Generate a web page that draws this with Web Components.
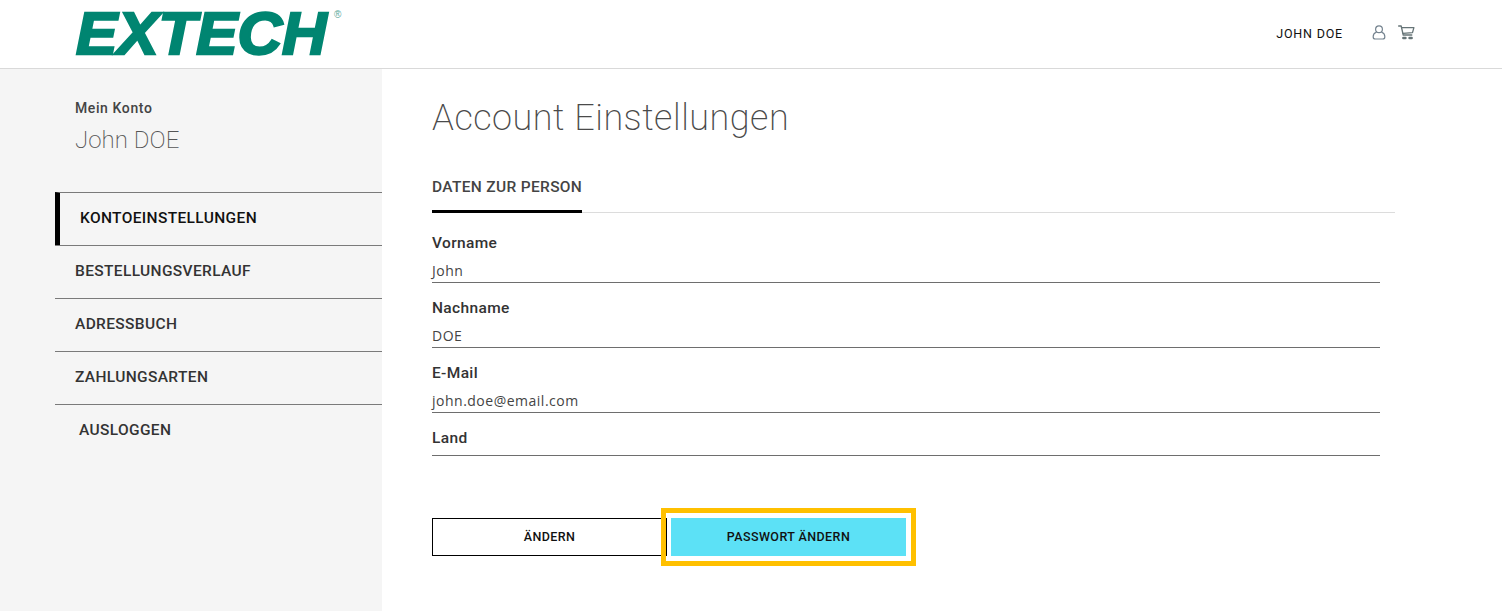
<!DOCTYPE html>
<html>

<head>
    <meta charset="utf-8">
    <title>Account Einstellungen</title>
    <style>
        html, body { margin: 0; height: 100%; background: #fff; }
        body { font-family: Roboto, "Liberation Sans", sans-serif; color: #333; }
    </style>
</head>

<body>
    <site-header name="JOHN DOE"></site-header>
    <account-layout>
        <account-sidebar slot="side" label="Mein Konto" name="John DOE">
            <nav-item active>KONTOEINSTELLUNGEN</nav-item>
            <nav-item>BESTELLUNGSVERLAUF</nav-item>
            <nav-item>ADRESSBUCH</nav-item>
            <nav-item>ZAHLUNGSARTEN</nav-item>
            <nav-item plain>AUSLOGGEN</nav-item>
        </account-sidebar>
        <h-title>Account Einstellungen</h-title>
        <tab-bar label="DATEN ZUR PERSON"></tab-bar>
        <form-field label="Vorname" value="John"></form-field>
        <form-field label="Nachname" value="DOE"></form-field>
        <form-field label="E-Mail" value="john.doe@email.com"></form-field>
        <form-field label="Land" value=""></form-field>
        <button-row>
            <action-button>ÄNDERN</action-button>
            <action-button primary highlighted>PASSWORT ÄNDERN</action-button>
        </button-row>
    </account-layout>

    <script>
        class SiteHeader extends HTMLElement {
            constructor() {
                super();
                this.attachShadow({ mode: 'open' });
                this.shadowRoot.innerHTML = `
                <style>
                    :host {
                        display: flex;
                        align-items: center;
                        height: 68px;
                        border-bottom: 1px solid #d9d9d9;
                        padding: 0 87px 0 75px;
                    }
                    .brand {
                        position: relative;
                        display: block;
                        width: 267px;
                        height: 68px;
                    }
                    .logo {
                        display: block;
                        font: italic 700 60px/68px "Liberation Sans", Arial, sans-serif;
                        color: #008571;
                        -webkit-text-stroke: 2.4px #008571;
                        transform: scaleX(1.03);
                        transform-origin: left center;
                        white-space: nowrap;
                        margin: 0 0 0 1px;
                    }
                    .reg {
                        position: absolute;
                        left: 259px;
                        top: 10px;
                        font: 10px/10px "Liberation Sans", sans-serif;
                        color: #5aa99b;
                    }
                    .name {
                        margin-left: auto;
                        margin-top: -2px;
                        margin-right: 1px;
                        font: 400 12.5px Roboto, sans-serif;
                        letter-spacing: .8px;
                        color: #111;
                    }
                    svg { display: block; fill: none; stroke-linecap: round; stroke-linejoin: round; margin-top: -4px; }
                    .user { margin-left: 28px; stroke: #74838f; }
                    .cart { margin-left: 12px; stroke: #667477; }
                </style>
                <span class="brand"><span class="logo">EXTECH</span><span class="reg">®</span></span>
                <span class="name">${this.getAttribute('name')}</span>
                <svg class="user" width="14" height="15" viewBox="0 0 14 15" stroke-width="1.2">
                    <circle cx="7" cy="4.2" r="3.4" />
                    <path d="M4.2 7.2C2.2 8 1.2 9.6 1.2 11.4v.6c0 1.2.8 2 2 2h7.6c1.2 0 2-.8 2-2v-.6c0-1.8-1-3.4-3-4.2" />
                </svg>
                <svg class="cart" width="17" height="15" viewBox="0 0 17 15" stroke-width="1.3">
                    <path d="M.6 1h2.6l2 9h8.6" />
                    <path d="M3.5 2.6h12.4l-1.4 5-9.5.8" />
                    <path d="M5.4 13h2M11.6 13h2" stroke-width="2.6" />
                </svg>
                `;
            }
        }

        class AccountLayout extends HTMLElement {
            constructor() {
                super();
                this.attachShadow({ mode: 'open' });
                this.shadowRoot.innerHTML = `
                <style>
                    :host { display: flex; min-height: 542px; }
                    .side { flex: 0 0 382px; background: #f5f5f5; }
                    main { flex: 1; padding: 0 122px 0 50px; min-width: 0; }
                </style>
                <div class="side"><slot name="side"></slot></div>
                <main><slot></slot></main>
                `;
            }
        }

        class AccountSidebar extends HTMLElement {
            constructor() {
                super();
                this.attachShadow({ mode: 'open' });
                this.shadowRoot.innerHTML = `
                <style>
                    :host { display: block; padding: 30px 0 0 55px; }
                    .label {
                        font: 500 14px/18px Roboto, sans-serif;
                        letter-spacing: .6px;
                        color: #444;
                        padding-left: 20px;
                    }
                    .name {
                        font: 200 24px/32px Roboto, sans-serif;
                        letter-spacing: .05px;
                        color: #555;
                        padding-left: 20px;
                        margin-top: 7px;
                        margin-bottom: 36px;
                    }
                </style>
                <div class="label">${this.getAttribute('label')}</div>
                <div class="name">${this.getAttribute('name')}</div>
                <slot></slot>
                `;
            }
        }

        class NavItem extends HTMLElement {
            constructor() {
                super();
                this.attachShadow({ mode: 'open' });
                this.shadowRoot.innerHTML = `
                <style>
                    :host {
                        display: flex;
                        align-items: center;
                        box-sizing: border-box;
                        height: 53px;
                        border-top: 1px solid #7a7a7a;
                        padding: 0 0 3px 20px;
                        font: 500 15.5px Roboto, sans-serif;
                        letter-spacing: .36px;
                        color: #333;
                    }
                    :host([active]) {
                        border-left: 5px solid #000;
                        color: #111;
                    }
                    :host([plain]) { padding-left: 24px; }
                </style>
                <slot></slot>
                `;
            }
        }

        class HTitle extends HTMLElement {
            constructor() {
                super();
                this.attachShadow({ mode: 'open' });
                this.shadowRoot.innerHTML = `
                <style>
                    :host {
                        display: block;
                        padding-top: 26px;
                        font: 200 36px/46px Roboto, sans-serif;
                        letter-spacing: .5px;
                        color: #4a4a4a;
                    }
                </style>
                <slot></slot>
                `;
            }
        }

        class TabBar extends HTMLElement {
            constructor() {
                super();
                this.attachShadow({ mode: 'open' });
                this.shadowRoot.innerHTML = `
                <style>
                    :host {
                        display: block;
                        margin-top: 32px;
                        margin-right: -15px;
                        border-bottom: 1px solid #dcdcdc;
                        height: 39px;
                    }
                    span {
                        display: inline-block;
                        box-sizing: border-box;
                        height: 40px;
                        padding-top: 4px;
                        border-bottom: 3px solid #000;
                        font: 500 15.5px/20px Roboto, sans-serif;
                        letter-spacing: .33px;
                        color: #444;
                    }
                </style>
                <span>${this.getAttribute('label')}</span>
                `;
            }
        }

        class FormField extends HTMLElement {
            constructor() {
                super();
                this.attachShadow({ mode: 'open' });
                this.shadowRoot.innerHTML = `
                <style>
                    :host {
                        display: block;
                        height: 65px;
                        box-sizing: border-box;
                    }
                    :host(:first-of-type) { margin-top: 18px; }
                    label {
                        display: block;
                        font: 500 15.5px/24px Roboto, sans-serif;
                        letter-spacing: .35px;
                        color: #333;
                    }
                    .value {
                        box-sizing: border-box;
                        height: 28px;
                        padding-top: 6px;
                        border-bottom: 1px solid #6e6e6e;
                        font: 400 14px/20px "Open Sans", sans-serif;
                        letter-spacing: .5px;
                        color: #444;
                    }
                    :host([value=""]) .value { height: 7px; padding: 0; margin-top: -1px; }
                </style>
                <label>${this.getAttribute('label')}</label>
                <div class="value">${this.getAttribute('value')}</div>
                `;
            }
        }

        class ButtonRow extends HTMLElement {
            constructor() {
                super();
                this.attachShadow({ mode: 'open' });
                this.shadowRoot.innerHTML = `
                <style>
                    :host { display: flex; gap: 4px; margin-top: 27px; }
                </style>
                <slot></slot>
                `;
            }
        }

        class ActionButton extends HTMLElement {
            constructor() {
                super();
                this.attachShadow({ mode: 'open' });
                this.shadowRoot.innerHTML = `
                <style>
                    :host {
                        position: relative;
                        display: flex;
                        align-items: center;
                        justify-content: center;
                        box-sizing: border-box;
                        width: 235px;
                        height: 38px;
                        border: 1px solid #000;
                        padding-bottom: 1px;
                        font: 500 12.5px Roboto, sans-serif;
                        letter-spacing: .42px;
                        color: #111;
                    }
                    :host([primary]) { background: #5ce1f6; border-color: #5ce1f6; }
                    :host([highlighted])::after {
                        content: "";
                        position: absolute;
                        inset: -11px;
                        border: 5px solid #ffc000;
                    }
                </style>
                <slot></slot>
                `;
            }
        }

        customElements.define('site-header', SiteHeader);
        customElements.define('account-layout', AccountLayout);
        customElements.define('account-sidebar', AccountSidebar);
        customElements.define('nav-item', NavItem);
        customElements.define('h-title', HTitle);
        customElements.define('tab-bar', TabBar);
        customElements.define('form-field', FormField);
        customElements.define('button-row', ButtonRow);
        customElements.define('action-button', ActionButton);
    </script>
</body>

</html>
